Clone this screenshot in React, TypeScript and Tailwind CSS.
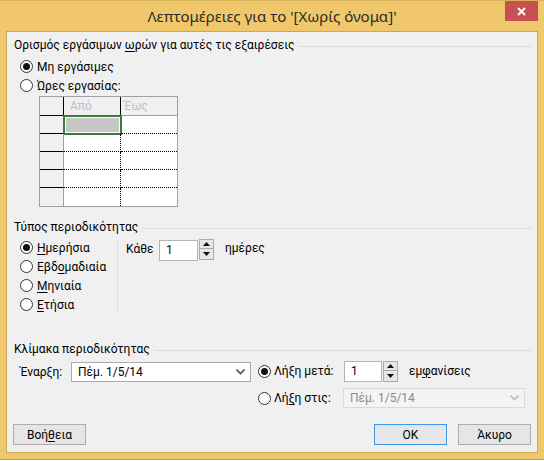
import React from 'react'

const FONT = { fontFamily: 'Roboto, "Noto Sans", sans-serif' }
const TITLE_FONT = { fontFamily: '"Noto Sans", "Open Sans", sans-serif' }

function Radio({ checked = false }: { checked?: boolean }) {
  return (
    <span className="w-[13px] h-[13px] rounded-full border border-[#333] bg-white flex items-center justify-center shrink-0">
      {checked && <span className="w-[7px] h-[7px] rounded-full bg-[#111]" />}
    </span>
  )
}

function GroupHeader({ children }: { children: React.ReactNode }) {
  return (
    <div className="h-[16px] flex items-center pl-[7px] pr-[6px]">
      <span className="whitespace-nowrap">{children}</span>
      <div className="flex-1 h-px bg-[#dcdcdc] ml-[4px] mt-[2px]" />
    </div>
  )
}

function Tri({ up }: { up?: boolean }) {
  return (
    <svg width="7" height="4" viewBox="0 0 7 4">
      <path d={up ? 'M0 4 L3.5 0 L7 4 Z' : 'M0 0 L3.5 4 L7 0 Z'} fill="#111" />
    </svg>
  )
}

function Spinner() {
  return (
    <div className="w-[15px] h-[21px] flex flex-col ml-px">
      <div className="h-[10px] border border-[#acacac] bg-[#e6e6e6] flex items-center justify-center">
        <Tri up />
      </div>
      <div className="h-[11px] border border-t-0 border-[#acacac] bg-[#e6e6e6] flex items-center justify-center">
        <Tri />
      </div>
    </div>
  )
}

function Chevron({ color }: { color: string }) {
  return (
    <svg width="9" height="6" viewBox="0 0 9 6">
      <path d="M0.5 0.5 L4.5 4.5 L8.5 0.5" fill="none" stroke={color} strokeWidth="1.6" />
    </svg>
  )
}

function RadioRow({ checked, children }: { checked?: boolean; children: React.ReactNode }) {
  return (
    <div className="h-[19px] flex items-center gap-[4px]">
      <Radio checked={checked} />
      <span>{children}</span>
    </div>
  )
}

function Button({ children, primary }: { children: React.ReactNode; primary?: boolean }) {
  return (
    <div
      className={`w-[73px] h-[21px] flex items-center justify-center bg-[#e6e6e6] border ${
        primary ? 'border-[#3c9ae8]' : 'border-[#adadad]'
      }`}
    >
      {children}
    </div>
  )
}

const U = ({ children }: { children: React.ReactNode }) => (
  <span className="underline underline-offset-[2px] decoration-1">{children}</span>
)

export default function App() {
  const rows = [0, 1, 2, 3, 4]
  return (
    <div
      className="w-[544px] h-[461px] bg-[#f0c86b] flex flex-col text-[12px] text-black overflow-hidden"
      style={FONT}
    >
      {/* title bar */}
      <div className="h-[31px] shrink-0 relative flex items-center justify-center border-t border-[#d8b45e]">
        <span className="text-[15px] text-[#2b2b2b]" style={TITLE_FONT}>
          Λεπτομέρειες για το '[Χωρίς όνομα]'
        </span>
        <div className="absolute top-0 right-[6px] w-[33px] h-[20px] bg-[#c75050] flex items-center justify-center">
          <svg width="9" height="9" viewBox="0 0 9 9">
            <path d="M1 1 L8 8 M8 1 L1 8" stroke="#fff" strokeWidth="2" />
          </svg>
        </div>
      </div>

      {/* client */}
      <div className="mx-[6px] h-[422px] shrink-0 bg-[#f0f0f0] border border-[#c8a65a] flex flex-col pt-[5px]">
        <GroupHeader>
          Ορισμός εργάσιμων <U>ω</U>ρών για αυτές τις εξαιρέσεις
        </GroupHeader>
        <div className="pl-[13px] mt-[4px] flex flex-col">
          <RadioRow checked>Μη εργάσιμες</RadioRow>
          <RadioRow>Ώρες εργασίας:</RadioRow>
        </div>

        {/* table */}
        <div className="ml-[32px] mt-px w-[139px] border border-[#a0a0a0] bg-white grid grid-cols-[24px_57px_56px] grid-rows-[19px_18px_18px_18px_18px_18px]">
          <div className="border-r border-b border-black bg-[#f0f0f0]" />
          <div className="border-r border-b border-r-black border-b-[#a0a0a0] bg-[#f0f0f0] pl-[6px] text-[#b4c0d4] leading-[18px]">
            Από
          </div>
          <div className="border-b border-[#a0a0a0] bg-[#f0f0f0] pl-[3px] text-[#b4c0d4] leading-[18px]">Έως</div>
          {rows.map(r => (
            <React.Fragment key={r}>
              <div className={`border-r border-r-[#a0a0a0] bg-[#f0f0f0] ${r < 4 ? 'border-b border-b-black' : ''}`} />
              {r === 0 ? (
                <div className="border-2 border-[#3a7b3a] p-px -ml-px -mt-px w-[59px] h-[20px] bg-white">
                  <div className="w-full h-full bg-[#c6c6c6]" />
                </div>
              ) : (
                <div className={`border-r border-dotted border-r-black ${r < 4 ? 'border-b border-b-black' : ''}`} />
              )}
              <div className={`${r < 4 ? 'border-b border-dotted border-b-black' : ''}`} />
            </React.Fragment>
          ))}
        </div>

        {/* periodicity type */}
        <div className="mt-[12px]">
          <GroupHeader>Τύπος περιοδικότητας</GroupHeader>
        </div>
        <div className="mt-[3px] flex">
          <div className="w-[110px] pl-[13px] flex flex-col">
            <RadioRow checked>
              <U>Η</U>μερήσια
            </RadioRow>
            <RadioRow>
              Εβδ<U>ο</U>μαδιαία
            </RadioRow>
            <RadioRow>
              <U>Μ</U>ηνιαία
            </RadioRow>
            <RadioRow>
              <U>Ε</U>τήσια
            </RadioRow>
          </div>
          <div className="w-px h-[72px] mt-[2px] bg-[#dcdcdc]" />
          <div className="ml-[8px] mt-[1px] flex items-start">
            <span className="w-[33px] h-[21px] leading-[21px]">Κάθε</span>
            <div className="w-[39px] h-[21px] mt-px bg-white border border-[#b4b4b4] pl-[6px] leading-[19px]">1</div>
            <Spinner />
            <span className="ml-[11px] h-[19px] leading-[19px]">ημέρες</span>
          </div>
        </div>

        {/* range */}
        <div className="mt-[27px]">
          <GroupHeader>Κλίμακα περιοδικότητας</GroupHeader>
        </div>
        <div className="mt-[3px] flex pl-[13px]">
          <div className="flex items-center mt-[2px] h-[20px]">
            <span className="w-[51px]">Έναρξη:</span>
            <div className="w-[180px] h-[20px] bg-white border border-[#acacac] flex items-center justify-between pl-[6px] pr-[5px]">
              <span>Πέμ. 1/5/14</span>
              <Chevron color="#555" />
            </div>
          </div>
          <div className="ml-[7px] flex flex-col gap-[6px]">
            <div className="h-[22px] flex items-center">
              <div className="w-[86px] flex items-center gap-[3px]">
                <Radio checked />
                <span>Λήξη μετά:</span>
              </div>
              <div className="w-[38px] h-[21px] bg-white border border-[#b4b4b4] pl-[6px] leading-[19px]">1</div>
              <Spinner />
              <span className="ml-[11px]">
                εμ<U>φ</U>ανίσεις
              </span>
            </div>
            <div className="h-[20px] flex items-center">
              <div className="w-[85px] flex items-center gap-[3px]">
                <Radio />
                <span>
                  Λή<U>ξ</U>η στις:
                </span>
              </div>
              <div className="w-[182px] h-[20px] bg-[#f4f4f4] border border-[#d9d9d9] flex items-center justify-between pl-[6px] pr-[5px] text-[#8a8a8a]">
                <span>Πέμ. 1/5/14</span>
                <Chevron color="#bcbcbc" />
              </div>
            </div>
          </div>
        </div>

        {/* buttons */}
        <div className="mt-[16px] flex px-[6px]">
          <Button>
            Βοή<U>θ</U>εια
          </Button>
          <div className="flex-1" />
          <Button primary>OK</Button>
          <div className="w-[11px]" />
          <Button>Άκυρο</Button>
        </div>
      </div>

      <div className="flex-1 border-b border-[#c4a04e]" />
      <div className="h-px bg-white shrink-0" />
    </div>
  )
}
